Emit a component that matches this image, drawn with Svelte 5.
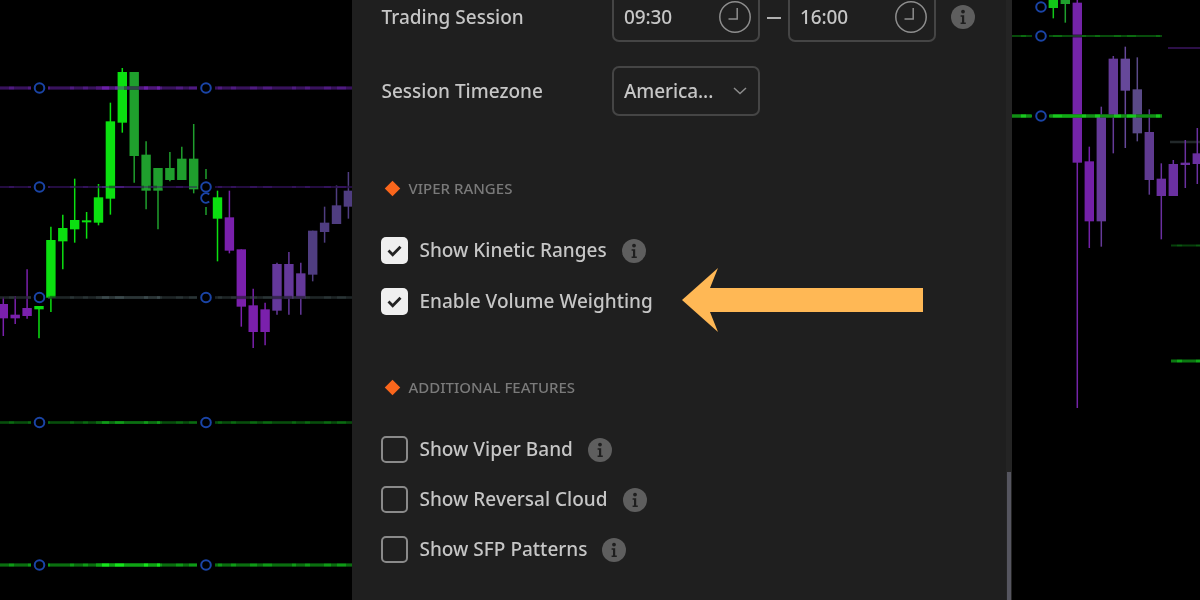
<script>
	const green = "#0be010";
	const dkgreen = "#1f9f2d";
	const purple = "#7a20ac";
	const muted = "#64389a";
	const dim = "#4f3d80";

	// [body top, body bottom, wick top, wick bottom, colour], read off a 3x crop
	const leftRaw = [
		[762, 805, 742, 858, purple],
		[794, 805, 738, 822, purple],
		[774, 798, 658, 806, purple],
		[768, 778, 768, 865, green],
		[570, 743, 530, 786, green],
		[534, 574, 494, 658, green],
		[510, 538, 386, 578, green],
		[511, 517, 486, 566, green],
		[442, 518, 402, 526, green],
		[214, 446, 158, 494, green],
		[66, 218, 54, 248, green],
		[66, 318, 66, 398, dkgreen],
		[314, 422, 274, 478, dkgreen],
		[354, 422, 354, 538, dkgreen],
		[354, 390, 306, 394, dkgreen],
		[326, 390, 290, 390, dkgreen],
		[326, 418, 222, 430, dkgreen],
		null,
		[442, 506, 422, 634, green],
		[502, 602, 422, 610, purple],
		[598, 770, 598, 830, purple],
		[766, 846, 716, 894, purple],
		[778, 846, 758, 886, purple],
		[642, 782, 638, 794, muted],
		[642, 746, 606, 794, muted],
		[670, 746, 638, 794, muted],
		[542, 674, 542, 694, dim],
		[518, 546, 470, 578, dim],
		[466, 522, 406, 522, dim],
		[422, 470, 366, 506, dim],
	];
	const rightRaw = [
		[-10, 24, -10, 55, "#12c818"],
		[-10, 12, -10, 68, "#1f9f2d"],
		[8, 488, 0, 1224, "#7424a8"],
		[484, 664, 440, 744, "#7320a8"],
		[348, 664, 320, 740, "#653a98"],
		[176, 348, 168, 460, "#653a98"],
		[176, 272, 140, 444, "#66489a"],
		[268, 400, 172, 424, "#5a4a88"],
		[396, 540, 328, 584, "#5f3a90"],
		[536, 588, 490, 718, "#6a2fa0"],
		[492, 588, 480, 588, "#6a30a0"],
		[488, 495, 420, 564, "#6a30a0"],
		[460, 492, 384, 552, "#6a30a0"],
	];

	const left = leftRaw.flatMap((c, i) =>
		c ? [{ x: 3.3 + i * 11.9, top: c[0] / 3 + 50, bot: c[1] / 3 + 50, wt: c[2] / 3 + 50, wb: c[3] / 3 + 50, color: c[4] }] : []
	);
	const right = rightRaw.map((c, i) => ({
		x: 1053.3 + i * 12,
		top: c[0] / 3,
		bot: c[1] / 3,
		wt: c[2] / 3,
		wb: c[3] / 3,
		color: c[4],
	}));

	const leftLines = [
		{ y: 88, color: "#4f1a80", w: 3, bright: "#6c1fa8" },
		{ y: 187, color: "#32125a", w: 2, bright: "#451a78" },
		{ y: 297.5, color: "#2a3436", w: 2.5, bright: "#3c4a4c" },
		{ y: 422.5, color: "#0a6a10", w: 2.5, bright: "#109a18" },
		{ y: 565, color: "#0e9a16", w: 3, bright: "#16e41c" },
	];
	const rightLines = [
		{ y: 36, color: "#0b6a10", w: 2, x1: 1012, x2: 1162 },
		{ y: 116, color: "#18c81e", w: 3, x1: 1012, x2: 1162 },
		{ y: 48, color: "#2c1048", w: 2, x1: 1168, x2: 1200 },
		{ y: 142, color: "#22282a", w: 2.5, x1: 1170, x2: 1200 },
		{ y: 245.5, color: "#0a5a10", w: 2, x1: 1171, x2: 1200 },
		{ y: 361, color: "#10a818", w: 3, x1: 1171, x2: 1200 },
	];
	const leftHandles = [88, 187, 297.5, 422.5, 565];
	const rightHandles = [7, 36, 116];

	const rangeOptions = [
		{ label: "Show Kinetic Ranges", checked: true, info: true },
		{ label: "Enable Volume Weighting", checked: true, info: false },
	];
	const featureOptions = [
		{ label: "Show Viper Band", checked: false, info: true },
		{ label: "Show Reversal Cloud", checked: false, info: true },
		{ label: "Show SFP Patterns", checked: false, info: true },
	];
</script>

{#snippet candles(list)}
	{#each list as c}
		<line x1={c.x} x2={c.x} y1={c.wt} y2={c.wb} stroke={c.color} stroke-width="1.5" />
		<rect x={c.x - 4.7} y={c.top} width="9.4" height={c.bot - c.top} fill={c.color} />
	{/each}
{/snippet}

{#snippet leftLine(l)}
	<path d="M0 {l.y}H31M48 {l.y}H197M215 {l.y}H352" stroke={l.color} stroke-width={l.w} />
	<path d="M96 {l.y}H160" stroke={l.bright} stroke-width={l.w} />
{/snippet}

{#snippet handle(x, y)}
	<circle cx={x} cy={y} r="4.8" fill="none" stroke="#1a44a6" stroke-width="2" />
{/snippet}

{#snippet info()}
	<svg class="info" viewBox="0 0 24 24" width="24" height="24">
		<circle cx="12" cy="12" r="12" fill="#5e5e5e" />
		<circle cx="12" cy="6.6" r="1.9" fill="#1f1f1f" />
		<path d="M9.6 10.2h3.6v7.2h1.6v1.6H9.6v-1.6h1.4v-5.6H9.6z" fill="#1f1f1f" />
	</svg>
{/snippet}

{#snippet clock()}
	<svg class="clock" viewBox="0 0 32 32" width="32" height="32">
		<circle cx="16" cy="16" r="15.2" fill="none" stroke="#8e8e8e" stroke-width="1.5" />
		<path d="M18.2 7v11H9.5" fill="none" stroke="#8e8e8e" stroke-width="1.5" />
	</svg>
{/snippet}

{#snippet option(o)}
	<div class="option">
		<span class="box" class:on={o.checked}>
			{#if o.checked}
				<svg viewBox="0 0 27 27" width="27" height="27">
					<path d="M7.5 13.5l4.2 4.2 7.8-8" fill="none" stroke="#222" stroke-width="2.8" />
				</svg>
			{/if}
		</span>
		<span class="text">{o.label}</span>
		{#if o.info}{@render info()}{/if}
	</div>
{/snippet}

<div class="page">
	<svg class="chart" width="352" height="600" viewBox="0 0 352 600">
		{#each leftLines as l}
			{@render leftLine(l)}
		{/each}
		{@render candles(left)}
		<g opacity="0.45">
			{#each leftLines as l}
				{@render leftLine(l)}
			{/each}
		</g>
		{#each leftLines as l}
			<path class="mottle" d="M0 {l.y}H352" stroke-width={l.w + 1} />
		{/each}
		<path d="M206 169V179M206 207V215" stroke="#1f9f2d" stroke-width="1.5" />
		{#each leftHandles as y}
			{@render handle(39.5, y)}
			{@render handle(206, y)}
		{/each}
		<path d="M209.2 194.4A4.8 4.8 0 1 0 209.2 201.6" fill="none" stroke="#1a44a6" stroke-width="2" />
	</svg>

	<section class="panel">
		<div class="content">
			<div class="row">
				<span class="label">Trading Session</span>
				<div class="field">09:30{@render clock()}</div>
				<span class="dash"></span>
				<div class="field">16:00{@render clock()}</div>
				<span class="row-info">{@render info()}</span>
			</div>
			<div class="row second">
				<span class="label">Session Timezone</span>
				<div class="field">
					America...
					<svg viewBox="0 0 14 8" width="14" height="8">
						<path d="M1 1l6 5.5L13 1" fill="none" stroke="#8c8c8c" stroke-width="1.5" />
					</svg>
				</div>
			</div>

			<h3 class="heading"><i class="diamond"></i>VIPER RANGES</h3>
			<div class="options ranges">
				{#each rangeOptions as o}{@render option(o)}{/each}
			</div>

			<h3 class="heading"><i class="diamond"></i>ADDITIONAL FEATURES</h3>
			<div class="options">
				{#each featureOptions as o}{@render option(o)}{/each}
			</div>
		</div>

		<div class="track"><div class="thumb"></div></div>

		<svg class="arrow" width="242" height="66" viewBox="0 0 242 66">
			<polygon points="0,32 36,0 28,20 241,20 241,44 28,44 36,64" fill="#ffb855" />
		</svg>
	</section>

	<svg class="chart" width="188" height="600" viewBox="1012 0 188 600">
		{#each rightLines as l}
			<path d="M{l.x1} {l.y}H{l.x2}" stroke={l.color} stroke-width={l.w} />
		{/each}
		{@render candles(right)}
		<g opacity="0.6">
			<path d="M1012 36H1162" stroke="#0b6a10" stroke-width="2" />
		</g>
		<path d="M1012 116H1031M1050 116H1162" stroke="#18c81e" stroke-width="3" />
		<path d="M1062 116H1082" stroke="#16ee1c" stroke-width="3" />
		<path class="mottle" d="M1012 36H1162M1012 116H1162M1168 361H1200M1168 245.5H1200" stroke-width="4" />
		<path d="M1032 36H1049M1032 116H1049" stroke="#000" stroke-width="4" />
		{#each rightHandles as y}
			{@render handle(1041, y)}
		{/each}
	</svg>
</div>

<style>
	:global(body) {
		background: #000;
	}

	.page {
		display: flex;
		width: 1200px;
		height: 600px;
		overflow: hidden;
		background: #000;
	}

	.chart {
		flex: none;
		display: block;
		filter: blur(0.5px);
	}

	.mottle {
		stroke: #000;
		opacity: 0.28;
		stroke-dasharray: 9 5 14 7 6 9 20 4;
	}

	.panel {
		position: relative;
		flex: none;
		width: 660px;
		height: 600px;
		overflow: hidden;
		background: #1f1f1f;
		font-family: "Noto Sans", sans-serif;
		font-weight: 500;
		color: #c6c6c6;
	}

	.content {
		margin-top: -8px;
		padding-left: 29.5px;
		filter: blur(0.4px);
	}

	.row {
		display: flex;
		align-items: center;
		height: 50px;
	}

	.second {
		margin-top: 24px;
	}

	.label {
		width: 230.5px;
		font-size: 19px;
	}

	.field {
		display: flex;
		align-items: center;
		justify-content: space-between;
		box-sizing: border-box;
		width: 148px;
		height: 50px;
		padding: 0 7px 0 10px;
		border: 2px solid #454545;
		border-radius: 7px;
		font-size: 19px;
		letter-spacing: -0.1px;
	}

	.second .field {
		padding-right: 11px;
	}

	.dash {
		width: 14px;
		height: 1.5px;
		margin: 2px 7px 0;
		background: #b0b0b0;
	}

	.row-info {
		display: flex;
		margin-left: 15px;
	}

	.heading {
		display: flex;
		align-items: center;
		gap: 11px;
		height: 20px;
		margin: 62px 0 39px 5px;
		font-size: 15px;
		font-weight: 500;
		color: #7a7a7a;
	}

	.diamond {
		width: 11px;
		height: 11px;
		background: #fa661c;
		transform: rotate(45deg);
	}

	.options {
		display: flex;
		flex-direction: column;
		gap: 23px;
		margin-left: -1px;
	}

	.ranges {
		gap: 24px;
	}

	.option {
		display: flex;
		align-items: center;
		height: 27px;
		font-size: 19px;
	}

	.box {
		flex: none;
		box-sizing: border-box;
		width: 27px;
		height: 27px;
		margin-right: 12px;
		border: 2px solid #8a8a8a;
		border-radius: 5px;
	}

	.box.on {
		border: none;
		background: #efefef;
	}

	.box svg {
		display: block;
	}

	.text {
		margin-right: 15px;
		padding-bottom: 2px;
	}

	.info,
	.clock {
		flex: none;
		display: block;
	}

	.track {
		position: absolute;
		right: 0;
		top: 0;
		bottom: 0;
		width: 6px;
		background: #242424;
	}

	.thumb {
		position: absolute;
		right: 1px;
		top: 472px;
		bottom: 0;
		width: 4px;
		background: #55555f;
	}

	.arrow {
		position: absolute;
		left: 330px;
		top: 268px;
	}
</style>
